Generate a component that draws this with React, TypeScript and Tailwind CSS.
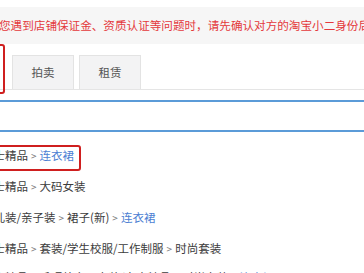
import React from 'react';

type Crumb = { text: string; link?: boolean };

const rows: Crumb[][] = [
  [{ text: '女士精品' }, { text: '连衣裙', link: true }],
  [{ text: '女士精品' }, { text: '大码女装' }],
  [{ text: '婴儿装/亲子装' }, { text: '裙子(新)' }, { text: '连衣裙', link: true }],
  [{ text: '女士精品' }, { text: '套装/学生校服/工作制服' }, { text: '时尚套装' }],
  [{ text: '女士精品' }, { text: '毛呢外套' }, { text: '女装/女士精品' }, { text: '时尚套装' }, { text: '连衣裙', link: true }],
];

const tabs = ['拍卖', '租赁'];

const CrumbRow: React.FC<{ items: Crumb[] }> = ({ items }) => (
  <div className="flex items-center whitespace-nowrap">
    {items.map((c, i) => (
      <React.Fragment key={i}>
        {i > 0 && <span className="px-[3px] text-[10px] text-[#777]">&gt;</span>}
        <span className={c.link ? 'text-[#4d7fd3]' : 'text-[#3c3c3c]'}>{c.text}</span>
      </React.Fragment>
    ))}
  </div>
);

export default function App() {
  return (
    <div
      className="relative w-[364px] h-[273px] overflow-hidden bg-white text-[11.5px]"
      style={{ fontFamily: '"Noto Sans CJK SC", "Noto Sans", sans-serif' }}
    >
      <div className="pt-[7px]">
        {/* notice */}
        <div className="h-[37px] bg-[#f6f6f6] flex items-center whitespace-nowrap text-[11.6px] text-[#e4393c] ml-[-1px]">
          您遇到店铺保证金、资质认证等问题时，请先确认对方的淘宝小二身份后再进行操作
        </div>

        {/* tabs */}
        <div className="relative flex gap-[5px] pl-[12px] pt-[11px] border-b border-[#e5e5e5]">
          {tabs.map((t) => (
            <div
              key={t}
              className="w-[62px] h-[34px] flex items-center justify-center bg-[#f3f3f4] border border-b-0 border-[#e3e3e3] text-[#555]"
            >
              {t}
            </div>
          ))}
          {/* annotation around the cut-off tab */}
          <div className="absolute left-[-50px] top-0 w-[55px] h-[50px] border-2 border-[#cf1f1f] rounded-[3px]" />
        </div>

        {/* search box */}
        <div className="mt-[10px] h-[32px] border-t-2 border-b-2 border-[#5b9bd8]" />

        {/* category list */}
        <div className="pt-[8px] ml-[-18px]">
          {rows.map((r, i) => (
            <div key={i} className={`relative h-[31px] flex items-center ${i === 4 ? 'mt-[-2px]' : ''}`}>
              <CrumbRow items={r} />
              {i === 0 && (
                <div className="absolute left-[-10px] top-[5px] w-[109px] h-[26px] border-2 border-[#cf1f1f] rounded-[3px]" />
              )}
            </div>
          ))}
        </div>
      </div>
    </div>
  );
}
